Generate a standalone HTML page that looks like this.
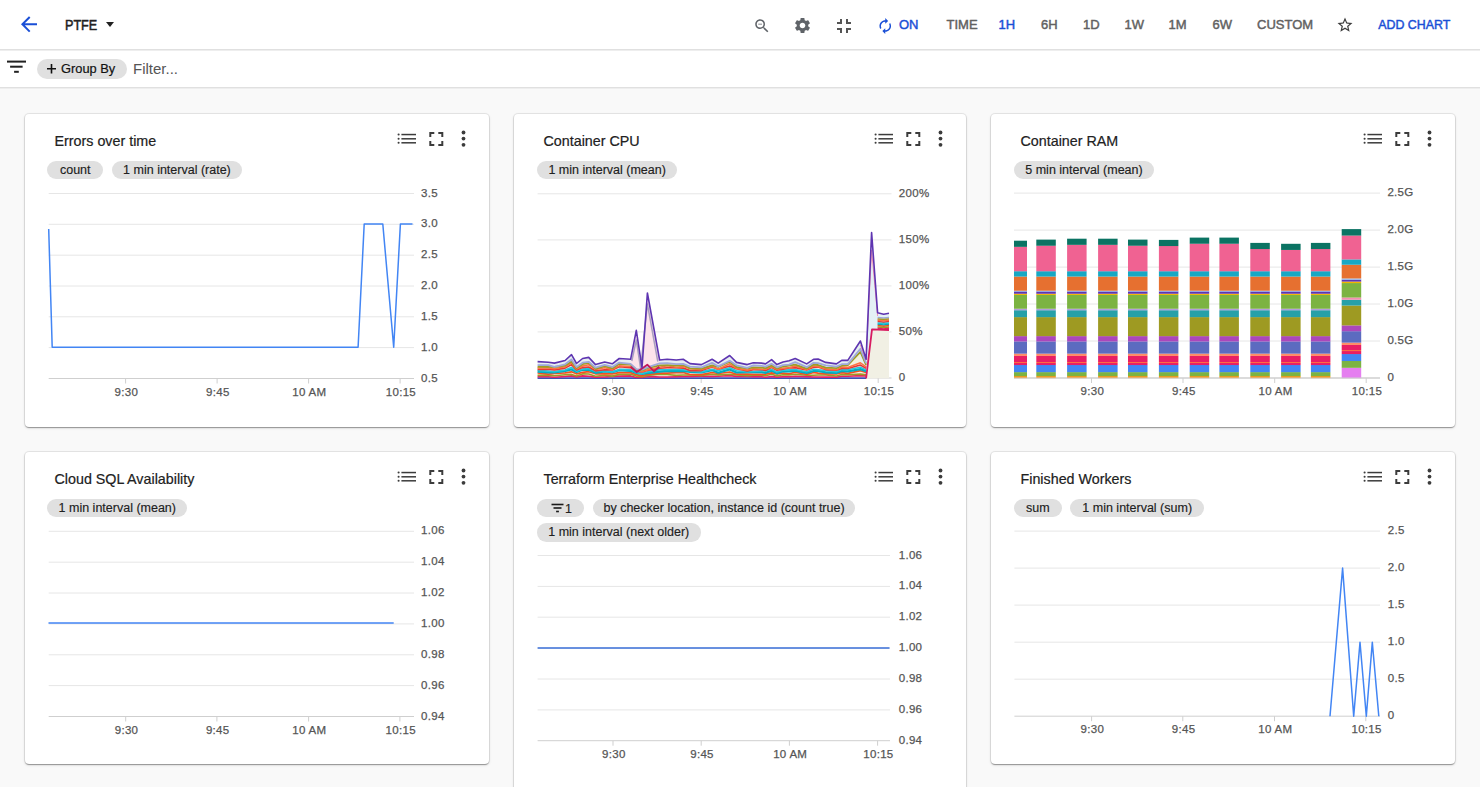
<!DOCTYPE html>
<html><head><meta charset="utf-8"><style>
*{box-sizing:border-box}
html,body{margin:0;padding:0}
body{width:1480px;height:787px;overflow:hidden;position:relative;background:#f9f9f9;font-family:"Liberation Sans", sans-serif;color:#212121}
.hdr{position:absolute;left:0;top:0;width:1480px;height:50px;background:#fff;border-bottom:1px solid #e0e0e0;box-shadow:0 1px 0 #eeeeee}
.fbar{position:absolute;left:0;top:51px;width:1480px;height:37px;background:#fff;border-bottom:1px solid #e0e0e0;box-shadow:0 1px 0 #eeeeee}
.card{position:absolute;background:#fff;border-radius:4px;box-shadow:0 0 0 1px rgba(0,0,0,.07),0 1px 1px rgba(0,0,0,.18),0 2px 1px -1px rgba(0,0,0,.12),0 1px 3px rgba(0,0,0,.15)}
.t{position:absolute;white-space:nowrap;line-height:1}
.title{font-size:14.3px;color:#212121;-webkit-text-stroke:0.2px #212121}
.chip{position:absolute;height:18.5px;border-radius:9.25px;background:#e0e0e0;font-size:12.5px;line-height:19.5px;color:#212121;white-space:nowrap;text-align:center;-webkit-text-stroke:0.15px #212121}
.tb{position:absolute;top:18px;font-size:13px;font-weight:400;-webkit-text-stroke:0.45px currentColor;color:#616161;line-height:13px;white-space:nowrap}
svg text{font-family:"Liberation Sans", sans-serif;stroke:#555;stroke-width:0.25px;letter-spacing:0.3px}
</style></head><body>
<div class="hdr">
<svg style="position:absolute;left:17px;top:12.4px" width="24" height="24" viewBox="0 0 24 24"><path d="M20 11H7.83l5.59-5.59L12 4l-8 8 8 8 1.41-1.41L7.83 13H20v-2z" fill="#1a4fd6" transform="translate(0,0.3)"/></svg>
<div class="t" style="left:65.3px;top:18.2px;font-size:14px;font-weight:400;-webkit-text-stroke:0.5px #212121;color:#212121;transform:scaleX(0.9);transform-origin:0 0">PTFE</div>
<svg style="position:absolute;left:106px;top:22px" width="8" height="5" viewBox="0 0 8 5"><path d="M0 0H8L4 5z" fill="#212121"/></svg>
<svg style="position:absolute;left:752.5px;top:17px" width="18" height="18" viewBox="0 0 24 24"><path fill="#5f6368" d="M15.5 14h-.79l-.28-.27C15.41 12.59 16 11.11 16 9.5 16 5.91 13.09 3 9.5 3S3 5.91 3 9.5 5.91 16 9.5 16c1.61 0 3.09-.59 4.23-1.57l.27.28v.79l5 4.99L20.49 19l-4.99-5zm-6 0C7.01 14 5 11.99 5 9.5S7.01 5 9.5 5 14 7.01 14 9.5 11.99 14 9.5 14zM7 9h5v1H7z"/></svg>
<svg style="position:absolute;left:793px;top:16px" width="19" height="19" viewBox="0 0 24 24"><path fill="#5f6368" d="M19.14 12.94c.04-.3.06-.61.06-.94 0-.32-.02-.64-.07-.94l2.03-1.58c.18-.14.23-.41.12-.61l-1.92-3.32c-.12-.22-.37-.29-.59-.22l-2.39.96c-.5-.38-1.03-.7-1.62-.94l-.36-2.54c-.04-.24-.24-.41-.48-.41h-3.84c-.24 0-.43.17-.47.41l-.36 2.54c-.59.24-1.13.57-1.62.94l-2.39-.96c-.22-.08-.47 0-.59.22L2.74 8.87c-.12.21-.08.47.12.61l2.03 1.58c-.05.3-.09.63-.09.94s.02.64.07.94l-2.03 1.58c-.18.14-.23.41-.12.61l1.92 3.32c.12.22.37.29.59.22l2.39-.96c.5.38 1.03.7 1.62.94l.36 2.54c.05.24.24.41.48.41h3.84c.24 0 .44-.17.47-.41l.36-2.54c.59-.24 1.13-.56 1.62-.94l2.39.96c.22.08.47 0 .59-.22l1.92-3.32c.12-.22.07-.47-.12-.61l-2.01-1.58zM12 15.6c-1.98 0-3.6-1.62-3.6-3.6s1.62-3.6 3.6-3.6 3.6 1.62 3.6 3.6-1.62 3.6-3.6 3.6z"/></svg>
<svg style="position:absolute;left:831.5px;top:13.6px" width="24" height="24" viewBox="0 0 24 24"><path fill="#555" d="M5 16h3v3h2v-5H5v2zm3-8H5v2h5V5H8v3zm6 11h2v-3h3v-2h-5v5zm2-11V5h-2v5h5V8h-3z"/></svg>
<svg style="position:absolute;left:878.3px;top:17.8px" width="14.5" height="16" viewBox="2 1 20 22"><path fill="#1a4fd6" d="M12 6v3l4-4-4-4v3c-4.42 0-8 3.58-8 8 0 1.57.46 3.03 1.24 4.26L6.7 14.8c-.45-.83-.7-1.79-.7-2.8 0-3.31 2.69-6 6-6zm6.76 1.74L17.3 9.2c.44.84.7 1.79.7 2.8 0 3.31-2.69 6-6 6v-3l-4 4 4 4v-3c4.42 0 8-3.58 8-8 0-1.57-.46-3.03-1.24-4.26z"/></svg>
<div class="tb" style="left:899px;color:#1a4fd6">ON</div>
<div class="tb" style="left:946.5px">TIME</div>
<div class="tb" style="left:998.5px;color:#1a4fd6">1H</div>
<div class="tb" style="left:1041px">6H</div>
<div class="tb" style="left:1083px">1D</div>
<div class="tb" style="left:1124.5px">1W</div>
<div class="tb" style="left:1168.5px">1M</div>
<div class="tb" style="left:1212.5px">6W</div>
<div class="tb" style="left:1257px">CUSTOM</div>
<svg style="position:absolute;left:1336.3px;top:16.2px" width="18" height="18" viewBox="0 0 24 24"><path fill="#3c3c3c" d="M22 9.24l-7.19-.62L12 2 9.19 8.63 2 9.24l5.46 4.73L5.82 21 12 17.27 18.18 21l-1.63-7.03L22 9.24zM12 15.4l-3.76 2.27 1-4.28-3.32-2.88 4.38-.38L12 6.1l1.71 4.04 4.38.38-3.32 2.88 1 4.28L12 15.4z"/></svg>
<div class="tb" style="left:1378.2px;top:18.5px;color:#1a4fd6;font-size:12.4px">ADD CHART</div>
</div>
<div class="fbar">
<svg style="position:absolute;left:7px;top:9px" width="19" height="14" viewBox="0 0 19 14"><g fill="#212121"><rect x="0" y="0.6" width="19" height="2"/><rect x="3.1" y="5.7" width="12.5" height="2"/><rect x="7.1" y="10.8" width="4.7" height="2"/></g></svg>
<div style="position:absolute;left:37px;top:7.7px;width:89.7px;height:20.3px;border-radius:10.15px;background:#e0e0e0"></div>
<svg style="position:absolute;left:47.3px;top:13.2px" width="9" height="9.6" viewBox="0 0 9 9.6"><path d="M3.7 0h1.6v9.6H3.7zM0 4h9v1.6H0z" fill="#111"/></svg>
<div class="t" style="left:60.5px;top:10.7px;font-size:13.5px;color:#111;-webkit-text-stroke:0.2px #111;transform:scaleX(0.95);transform-origin:0 0">Group By</div>
<div class="t" style="left:133px;top:9.5px;font-size:15px;color:#555">Filter...</div>
</div>

<div class="card" style="left:25px;top:114px;width:463.6px;height:312.5px"></div>
<div class="card" style="left:514.4px;top:114px;width:451.4px;height:312.5px"></div>
<div class="card" style="left:991.4px;top:114px;width:463.6px;height:312.5px"></div>
<div class="card" style="left:25px;top:452px;width:463.6px;height:312px"></div>
<div class="card" style="left:514.4px;top:452px;width:451.4px;height:360px"></div>
<div class="card" style="left:991.4px;top:452px;width:463.6px;height:312px"></div>

<div class="t title" style="left:54.5px;top:134.2px">Errors over time</div>
<div class="chip" style="left:47.4px;top:160.5px;width:55.7px">count</div>
<div class="chip" style="left:111.7px;top:160.5px;width:130.5px">1 min interval (rate)</div>
<svg style="position:absolute;left:392px;top:128px" width="80" height="22" viewBox="0 0 80 22">
<g fill="#3c3c3c">
<circle cx="6.6" cy="6.5" r="1.05"/><circle cx="6.6" cy="10.8" r="1.05"/><circle cx="6.6" cy="14.8" r="1.05"/>
<rect x="9.4" y="5.8" width="14.6" height="1.5"/><rect x="9.4" y="10.05" width="14.6" height="1.5"/><rect x="9.4" y="14.05" width="14.6" height="1.5"/>
</g>
<path fill="#3c3c3c" transform="translate(32.3,-1)" d="M7 14H5v5h5v-2H7v-3zm-2-4h2V7h3V5H5v5zm12 7h-3v2h5v-5h-2v3zM14 5v2h3v3h2V5h-5z"/>
<g fill="#3c3c3c"><circle cx="71.5" cy="4.5" r="1.9"/><circle cx="71.5" cy="10.6" r="1.9"/><circle cx="71.5" cy="16.8" r="1.9"/></g>
</svg>

<div class="t title" style="left:543.5px;top:134.2px">Container CPU</div>
<div class="chip" style="left:536.8px;top:160.5px;width:140.7px">1 min interval (mean)</div>
<svg style="position:absolute;left:869px;top:128px" width="80" height="22" viewBox="0 0 80 22">
<g fill="#3c3c3c">
<circle cx="6.6" cy="6.5" r="1.05"/><circle cx="6.6" cy="10.8" r="1.05"/><circle cx="6.6" cy="14.8" r="1.05"/>
<rect x="9.4" y="5.8" width="14.6" height="1.5"/><rect x="9.4" y="10.05" width="14.6" height="1.5"/><rect x="9.4" y="14.05" width="14.6" height="1.5"/>
</g>
<path fill="#3c3c3c" transform="translate(32.3,-1)" d="M7 14H5v5h5v-2H7v-3zm-2-4h2V7h3V5H5v5zm12 7h-3v2h5v-5h-2v3zM14 5v2h3v3h2V5h-5z"/>
<g fill="#3c3c3c"><circle cx="71.5" cy="4.5" r="1.9"/><circle cx="71.5" cy="10.6" r="1.9"/><circle cx="71.5" cy="16.8" r="1.9"/></g>
</svg>

<div class="t title" style="left:1020.5px;top:134.2px">Container RAM</div>
<div class="chip" style="left:1013.8px;top:160.5px;width:140.4px">5 min interval (mean)</div>
<svg style="position:absolute;left:1358px;top:128px" width="80" height="22" viewBox="0 0 80 22">
<g fill="#3c3c3c">
<circle cx="6.6" cy="6.5" r="1.05"/><circle cx="6.6" cy="10.8" r="1.05"/><circle cx="6.6" cy="14.8" r="1.05"/>
<rect x="9.4" y="5.8" width="14.6" height="1.5"/><rect x="9.4" y="10.05" width="14.6" height="1.5"/><rect x="9.4" y="14.05" width="14.6" height="1.5"/>
</g>
<path fill="#3c3c3c" transform="translate(32.3,-1)" d="M7 14H5v5h5v-2H7v-3zm-2-4h2V7h3V5H5v5zm12 7h-3v2h5v-5h-2v3zM14 5v2h3v3h2V5h-5z"/>
<g fill="#3c3c3c"><circle cx="71.5" cy="4.5" r="1.9"/><circle cx="71.5" cy="10.6" r="1.9"/><circle cx="71.5" cy="16.8" r="1.9"/></g>
</svg>

<div class="t title" style="left:54.5px;top:472.2px">Cloud SQL Availability</div>
<div class="chip" style="left:47.2px;top:498.6px;width:140.2px">1 min interval (mean)</div>
<svg style="position:absolute;left:392px;top:466px" width="80" height="22" viewBox="0 0 80 22">
<g fill="#3c3c3c">
<circle cx="6.6" cy="6.5" r="1.05"/><circle cx="6.6" cy="10.8" r="1.05"/><circle cx="6.6" cy="14.8" r="1.05"/>
<rect x="9.4" y="5.8" width="14.6" height="1.5"/><rect x="9.4" y="10.05" width="14.6" height="1.5"/><rect x="9.4" y="14.05" width="14.6" height="1.5"/>
</g>
<path fill="#3c3c3c" transform="translate(32.3,-1)" d="M7 14H5v5h5v-2H7v-3zm-2-4h2V7h3V5H5v5zm12 7h-3v2h5v-5h-2v3zM14 5v2h3v3h2V5h-5z"/>
<g fill="#3c3c3c"><circle cx="71.5" cy="4.5" r="1.9"/><circle cx="71.5" cy="10.6" r="1.9"/><circle cx="71.5" cy="16.8" r="1.9"/></g>
</svg>

<div class="t title" style="left:543.5px;top:472.2px">Terraform Enterprise Healthcheck</div>
<div class="chip" style="left:536.8px;top:498.5px;width:47.3px"></div>
<svg style="position:absolute;left:550.5px;top:502.5px" width="14" height="10" viewBox="0 0 14 10"><g fill="#1a1a1a"><rect x="0.5" y="0.7" width="12" height="1.6"/><rect x="2.5" y="4.2" width="8" height="1.6"/><rect x="5.1" y="7.7" width="2.8" height="1.6"/></g></svg>
<div class="t" style="left:565px;top:502.8px;font-size:12.5px;-webkit-text-stroke:0.15px #212121">1</div>
<div class="chip" style="left:593.1px;top:498.5px;width:261.9px">by checker location, instance id (count true)</div>
<div class="chip" style="left:536.8px;top:523.4px;width:163.9px">1 min interval (next older)</div>
<svg style="position:absolute;left:869px;top:466px" width="80" height="22" viewBox="0 0 80 22">
<g fill="#3c3c3c">
<circle cx="6.6" cy="6.5" r="1.05"/><circle cx="6.6" cy="10.8" r="1.05"/><circle cx="6.6" cy="14.8" r="1.05"/>
<rect x="9.4" y="5.8" width="14.6" height="1.5"/><rect x="9.4" y="10.05" width="14.6" height="1.5"/><rect x="9.4" y="14.05" width="14.6" height="1.5"/>
</g>
<path fill="#3c3c3c" transform="translate(32.3,-1)" d="M7 14H5v5h5v-2H7v-3zm-2-4h2V7h3V5H5v5zm12 7h-3v2h5v-5h-2v3zM14 5v2h3v3h2V5h-5z"/>
<g fill="#3c3c3c"><circle cx="71.5" cy="4.5" r="1.9"/><circle cx="71.5" cy="10.6" r="1.9"/><circle cx="71.5" cy="16.8" r="1.9"/></g>
</svg>

<div class="t title" style="left:1020.5px;top:472.2px">Finished Workers</div>
<div class="chip" style="left:1014px;top:498.6px;width:47.6px">sum</div>
<div class="chip" style="left:1070.4px;top:498.6px;width:133.6px">1 min interval (sum)</div>
<svg style="position:absolute;left:1358px;top:466px" width="80" height="22" viewBox="0 0 80 22">
<g fill="#3c3c3c">
<circle cx="6.6" cy="6.5" r="1.05"/><circle cx="6.6" cy="10.8" r="1.05"/><circle cx="6.6" cy="14.8" r="1.05"/>
<rect x="9.4" y="5.8" width="14.6" height="1.5"/><rect x="9.4" y="10.05" width="14.6" height="1.5"/><rect x="9.4" y="14.05" width="14.6" height="1.5"/>
</g>
<path fill="#3c3c3c" transform="translate(32.3,-1)" d="M7 14H5v5h5v-2H7v-3zm-2-4h2V7h3V5H5v5zm12 7h-3v2h5v-5h-2v3zM14 5v2h3v3h2V5h-5z"/>
<g fill="#3c3c3c"><circle cx="71.5" cy="4.5" r="1.9"/><circle cx="71.5" cy="10.6" r="1.9"/><circle cx="71.5" cy="16.8" r="1.9"/></g>
</svg>

<svg style="position:absolute;left:0;top:0" width="1480" height="787" viewBox="0 0 1480 787"><line x1="48.7" y1="193.5" x2="414" y2="193.5" stroke="#e6e6e6" stroke-width="1"/><text x="421.0" y="196.5" font-size="11.5" fill="#555555" text-anchor="start" font-weight="400">3.5</text><line x1="48.7" y1="224.3" x2="414" y2="224.3" stroke="#e6e6e6" stroke-width="1"/><text x="421.0" y="227.3" font-size="11.5" fill="#555555" text-anchor="start" font-weight="400">3.0</text><line x1="48.7" y1="255.2" x2="414" y2="255.2" stroke="#e6e6e6" stroke-width="1"/><text x="421.0" y="258.2" font-size="11.5" fill="#555555" text-anchor="start" font-weight="400">2.5</text><line x1="48.7" y1="286.0" x2="414" y2="286.0" stroke="#e6e6e6" stroke-width="1"/><text x="421.0" y="289.0" font-size="11.5" fill="#555555" text-anchor="start" font-weight="400">2.0</text><line x1="48.7" y1="316.8" x2="414" y2="316.8" stroke="#e6e6e6" stroke-width="1"/><text x="421.0" y="319.8" font-size="11.5" fill="#555555" text-anchor="start" font-weight="400">1.5</text><line x1="48.7" y1="347.6" x2="414" y2="347.6" stroke="#e6e6e6" stroke-width="1"/><text x="421.0" y="350.6" font-size="11.5" fill="#555555" text-anchor="start" font-weight="400">1.0</text><line x1="48.7" y1="378.5" x2="414" y2="378.5" stroke="#cfcfcf" stroke-width="1"/><text x="421.0" y="381.5" font-size="11.5" fill="#555555" text-anchor="start" font-weight="400">0.5</text><line x1="125.6" y1="378.5" x2="125.6" y2="383.5" stroke="#cfcfcf" stroke-width="1"/><text x="126.4" y="395.5" font-size="11.5" fill="#555555" text-anchor="middle" font-weight="400">9:30</text><line x1="217.1" y1="378.5" x2="217.1" y2="383.5" stroke="#cfcfcf" stroke-width="1"/><text x="217.9" y="395.5" font-size="11.5" fill="#555555" text-anchor="middle" font-weight="400">9:45</text><line x1="308.6" y1="378.5" x2="308.6" y2="383.5" stroke="#cfcfcf" stroke-width="1"/><text x="309.4" y="395.5" font-size="11.5" fill="#555555" text-anchor="middle" font-weight="400">10 AM</text><line x1="400.1" y1="378.5" x2="400.1" y2="383.5" stroke="#cfcfcf" stroke-width="1"/><text x="400.9" y="395.5" font-size="11.5" fill="#555555" text-anchor="middle" font-weight="400">10:15</text><polyline points="48.7,229.0 52.2,347.3 358.1,347.3 364.2,224.0 382.8,224.0 393.7,347.3 400.4,224.0 412.5,224.0" fill="none" stroke="#4285f4" stroke-width="1.5" stroke-linejoin="round" /><line x1="48.7" y1="531.3" x2="414" y2="531.3" stroke="#e6e6e6" stroke-width="1"/><text x="421.0" y="534.3" font-size="11.5" fill="#555555" text-anchor="start" font-weight="400">1.06</text><line x1="48.7" y1="562.2" x2="414" y2="562.2" stroke="#e6e6e6" stroke-width="1"/><text x="421.0" y="565.2" font-size="11.5" fill="#555555" text-anchor="start" font-weight="400">1.04</text><line x1="48.7" y1="593.0" x2="414" y2="593.0" stroke="#e6e6e6" stroke-width="1"/><text x="421.0" y="596.0" font-size="11.5" fill="#555555" text-anchor="start" font-weight="400">1.02</text><line x1="48.7" y1="623.9" x2="414" y2="623.9" stroke="#e6e6e6" stroke-width="1"/><text x="421.0" y="626.9" font-size="11.5" fill="#555555" text-anchor="start" font-weight="400">1.00</text><line x1="48.7" y1="654.8" x2="414" y2="654.8" stroke="#e6e6e6" stroke-width="1"/><text x="421.0" y="657.8" font-size="11.5" fill="#555555" text-anchor="start" font-weight="400">0.98</text><line x1="48.7" y1="685.6" x2="414" y2="685.6" stroke="#e6e6e6" stroke-width="1"/><text x="421.0" y="688.6" font-size="11.5" fill="#555555" text-anchor="start" font-weight="400">0.96</text><line x1="48.7" y1="716.5" x2="414" y2="716.5" stroke="#cfcfcf" stroke-width="1"/><text x="421.0" y="719.5" font-size="11.5" fill="#555555" text-anchor="start" font-weight="400">0.94</text><line x1="125.7" y1="716.5" x2="125.7" y2="721.5" stroke="#cfcfcf" stroke-width="1"/><text x="126.5" y="733.5" font-size="11.5" fill="#555555" text-anchor="middle" font-weight="400">9:30</text><line x1="216.9" y1="716.5" x2="216.9" y2="721.5" stroke="#cfcfcf" stroke-width="1"/><text x="217.7" y="733.5" font-size="11.5" fill="#555555" text-anchor="middle" font-weight="400">9:45</text><line x1="308.6" y1="716.5" x2="308.6" y2="721.5" stroke="#cfcfcf" stroke-width="1"/><text x="309.4" y="733.5" font-size="11.5" fill="#555555" text-anchor="middle" font-weight="400">10 AM</text><line x1="399.9" y1="716.5" x2="399.9" y2="721.5" stroke="#cfcfcf" stroke-width="1"/><text x="400.7" y="733.5" font-size="11.5" fill="#555555" text-anchor="middle" font-weight="400">10:15</text><polyline points="48.5,623.0 393.7,623.0" fill="none" stroke="#4285f4" stroke-width="1.5" stroke-linejoin="round" /><line x1="537.6" y1="555.5" x2="890" y2="555.5" stroke="#e6e6e6" stroke-width="1"/><text x="898.7" y="558.5" font-size="11.5" fill="#555555" text-anchor="start" font-weight="400">1.06</text><line x1="537.6" y1="586.4" x2="890" y2="586.4" stroke="#e6e6e6" stroke-width="1"/><text x="898.7" y="589.4" font-size="11.5" fill="#555555" text-anchor="start" font-weight="400">1.04</text><line x1="537.6" y1="617.2" x2="890" y2="617.2" stroke="#e6e6e6" stroke-width="1"/><text x="898.7" y="620.2" font-size="11.5" fill="#555555" text-anchor="start" font-weight="400">1.02</text><line x1="537.6" y1="648.1" x2="890" y2="648.1" stroke="#e6e6e6" stroke-width="1"/><text x="898.7" y="651.1" font-size="11.5" fill="#555555" text-anchor="start" font-weight="400">1.00</text><line x1="537.6" y1="679.0" x2="890" y2="679.0" stroke="#e6e6e6" stroke-width="1"/><text x="898.7" y="682.0" font-size="11.5" fill="#555555" text-anchor="start" font-weight="400">0.98</text><line x1="537.6" y1="709.9" x2="890" y2="709.9" stroke="#e6e6e6" stroke-width="1"/><text x="898.7" y="712.9" font-size="11.5" fill="#555555" text-anchor="start" font-weight="400">0.96</text><line x1="537.6" y1="740.7" x2="890" y2="740.7" stroke="#cfcfcf" stroke-width="1"/><text x="898.7" y="743.7" font-size="11.5" fill="#555555" text-anchor="start" font-weight="400">0.94</text><line x1="613.0" y1="740.7" x2="613.0" y2="745.7" stroke="#cfcfcf" stroke-width="1"/><text x="613.8" y="757.7" font-size="11.5" fill="#555555" text-anchor="middle" font-weight="400">9:30</text><line x1="701.2" y1="740.7" x2="701.2" y2="745.7" stroke="#cfcfcf" stroke-width="1"/><text x="702.0" y="757.7" font-size="11.5" fill="#555555" text-anchor="middle" font-weight="400">9:45</text><line x1="789.4" y1="740.7" x2="789.4" y2="745.7" stroke="#cfcfcf" stroke-width="1"/><text x="790.2" y="757.7" font-size="11.5" fill="#555555" text-anchor="middle" font-weight="400">10 AM</text><line x1="877.6" y1="740.7" x2="877.6" y2="745.7" stroke="#cfcfcf" stroke-width="1"/><text x="878.4" y="757.7" font-size="11.5" fill="#555555" text-anchor="middle" font-weight="400">10:15</text><polyline points="537.6,648.0 889.5,648.0" fill="none" stroke="#3a6fd8" stroke-width="1.5" stroke-linejoin="round" /><line x1="1014.4" y1="531.1" x2="1380" y2="531.1" stroke="#e6e6e6" stroke-width="1"/><text x="1387.8" y="534.1" font-size="11.5" fill="#555555" text-anchor="start" font-weight="400">2.5</text><line x1="1014.4" y1="568.1" x2="1380" y2="568.1" stroke="#e6e6e6" stroke-width="1"/><text x="1387.8" y="571.1" font-size="11.5" fill="#555555" text-anchor="start" font-weight="400">2.0</text><line x1="1014.4" y1="605.1" x2="1380" y2="605.1" stroke="#e6e6e6" stroke-width="1"/><text x="1387.8" y="608.1" font-size="11.5" fill="#555555" text-anchor="start" font-weight="400">1.5</text><line x1="1014.4" y1="642.2" x2="1380" y2="642.2" stroke="#e6e6e6" stroke-width="1"/><text x="1387.8" y="645.2" font-size="11.5" fill="#555555" text-anchor="start" font-weight="400">1.0</text><line x1="1014.4" y1="679.2" x2="1380" y2="679.2" stroke="#e6e6e6" stroke-width="1"/><text x="1387.8" y="682.2" font-size="11.5" fill="#555555" text-anchor="start" font-weight="400">0.5</text><line x1="1014.4" y1="716.2" x2="1380" y2="716.2" stroke="#cfcfcf" stroke-width="1"/><text x="1387.8" y="719.2" font-size="11.5" fill="#555555" text-anchor="start" font-weight="400">0</text><line x1="1091.6" y1="716.2" x2="1091.6" y2="721.2" stroke="#cfcfcf" stroke-width="1"/><text x="1092.4" y="733.2" font-size="11.5" fill="#555555" text-anchor="middle" font-weight="400">9:30</text><line x1="1182.8" y1="716.2" x2="1182.8" y2="721.2" stroke="#cfcfcf" stroke-width="1"/><text x="1183.6" y="733.2" font-size="11.5" fill="#555555" text-anchor="middle" font-weight="400">9:45</text><line x1="1274.5" y1="716.2" x2="1274.5" y2="721.2" stroke="#cfcfcf" stroke-width="1"/><text x="1275.3" y="733.2" font-size="11.5" fill="#555555" text-anchor="middle" font-weight="400">10 AM</text><line x1="1365.8" y1="716.2" x2="1365.8" y2="721.2" stroke="#cfcfcf" stroke-width="1"/><text x="1366.6" y="733.2" font-size="11.5" fill="#555555" text-anchor="middle" font-weight="400">10:15</text><polyline points="1330.0,716.2 1342.6,568.1 1353.7,716.2 1360.0,642.3 1366.3,716.2 1372.3,642.3 1378.8,716.2" fill="none" stroke="#4285f4" stroke-width="1.5" stroke-linejoin="round" /><line x1="537.6" y1="193.8" x2="891.5" y2="193.8" stroke="#e6e6e6" stroke-width="1"/><text x="898.8" y="196.8" font-size="11.5" fill="#555555" text-anchor="start" font-weight="400">200%</text><line x1="537.6" y1="239.9" x2="891.5" y2="239.9" stroke="#e6e6e6" stroke-width="1"/><text x="898.8" y="242.9" font-size="11.5" fill="#555555" text-anchor="start" font-weight="400">150%</text><line x1="537.6" y1="285.9" x2="891.5" y2="285.9" stroke="#e6e6e6" stroke-width="1"/><text x="898.8" y="288.9" font-size="11.5" fill="#555555" text-anchor="start" font-weight="400">100%</text><line x1="537.6" y1="331.9" x2="891.5" y2="331.9" stroke="#e6e6e6" stroke-width="1"/><text x="898.8" y="334.9" font-size="11.5" fill="#555555" text-anchor="start" font-weight="400">50%</text><line x1="537.6" y1="378.0" x2="891.5" y2="378.0" stroke="#cfcfcf" stroke-width="1"/><text x="898.8" y="381.0" font-size="11.5" fill="#555555" text-anchor="start" font-weight="400">0</text><line x1="612.6" y1="378.0" x2="612.6" y2="383.0" stroke="#cfcfcf" stroke-width="1"/><text x="613.4" y="395.0" font-size="11.5" fill="#555555" text-anchor="middle" font-weight="400">9:30</text><line x1="701.2" y1="378.0" x2="701.2" y2="383.0" stroke="#cfcfcf" stroke-width="1"/><text x="702.0" y="395.0" font-size="11.5" fill="#555555" text-anchor="middle" font-weight="400">9:45</text><line x1="789.4" y1="378.0" x2="789.4" y2="383.0" stroke="#cfcfcf" stroke-width="1"/><text x="790.2" y="395.0" font-size="11.5" fill="#555555" text-anchor="middle" font-weight="400">10 AM</text><line x1="878.2" y1="378.0" x2="878.2" y2="383.0" stroke="#cfcfcf" stroke-width="1"/><text x="879.0" y="395.0" font-size="11.5" fill="#555555" text-anchor="middle" font-weight="400">10:15</text><polygon points="537.6,361.6 548.3,362.3 554.4,363.1 565.1,360.5 571.5,354.7 576.5,363.5 582.6,358.5 588.7,357.4 595.5,364.6 604.7,362.0 612.3,363.8 619.2,358.5 630.6,359.3 636.3,330.3 642.0,367.7 647.4,293.0 659.6,360.0 667.2,359.3 676.3,360.0 683.2,359.3 690.0,363.6 701.4,364.6 712.1,359.3 718.2,363.1 729.7,355.5 736.5,362.4 747.2,364.6 753.3,362.7 761.7,363.1 765.5,363.9 771.6,359.6 776.9,364.6 783.0,362.0 789.1,360.8 795.2,358.5 806.7,363.9 813.5,359.3 818.1,359.0 825.7,362.4 836.4,363.9 841.7,360.4 847.8,360.4 860.4,341.0 866.1,359.3 866.1,363.2 860.4,348.7 847.8,364.1 841.7,364.2 836.4,366.6 825.7,365.4 818.1,363.1 813.5,362.8 806.7,367.2 795.2,362.2 789.1,364.6 783.0,365.2 776.9,367.3 771.6,363.8 765.5,366.6 761.7,365.9 753.3,365.4 747.2,367.8 736.5,365.3 729.7,360.8 718.2,366.4 712.1,362.9 701.4,367.3 690.0,366.7 683.2,363.8 676.3,364.2 667.2,363.2 659.6,363.4 647.4,367.4 642.0,369.6 636.3,369.1 630.6,363.8 619.2,362.6 612.3,366.9 604.7,364.9 595.5,367.7 588.7,361.8 582.6,362.7 576.5,367.0 571.5,359.5 565.1,364.3 554.4,366.9 548.3,365.1 537.6,365.2" fill="#e6eef1" stroke="none" /><polygon points="537.6,365.2 548.3,365.1 554.4,366.9 565.1,364.3 571.5,359.5 576.5,367.0 582.6,362.7 588.7,361.8 595.5,367.7 604.7,364.9 612.3,366.9 619.2,362.6 630.6,363.8 636.3,369.1 642.0,369.6 647.4,367.4 659.6,363.4 667.2,363.2 676.3,364.2 683.2,363.8 690.0,366.7 701.4,367.3 712.1,362.9 718.2,366.4 729.7,360.8 736.5,365.3 747.2,367.8 753.3,365.4 761.7,365.9 765.5,366.6 771.6,363.8 776.9,367.3 783.0,365.2 789.1,364.6 795.2,362.2 806.7,367.2 813.5,362.8 818.1,363.1 825.7,365.4 836.4,366.6 841.7,364.2 847.8,364.1 860.4,348.7 866.1,363.2 866.1,364.8 860.4,351.9 847.8,365.2 841.7,365.7 836.4,368.1 825.7,367.6 818.1,365.0 813.5,364.5 806.7,368.6 795.2,364.7 789.1,365.7 783.0,366.5 776.9,368.6 771.6,365.4 765.5,368.1 761.7,367.7 753.3,367.5 747.2,368.3 736.5,367.0 729.7,361.8 718.2,367.0 712.1,365.3 701.4,368.6 690.0,368.4 683.2,365.0 676.3,365.7 667.2,365.1 659.6,365.3 647.4,368.1 642.0,370.3 636.3,369.9 630.6,364.6 619.2,363.8 612.3,368.4 604.7,366.2 595.5,368.9 588.7,362.9 582.6,364.2 576.5,368.1 571.5,361.6 565.1,365.6 554.4,367.0 548.3,366.8 537.6,366.9" fill="#eceef8" stroke="none" /><polygon points="537.6,366.9 548.3,366.8 554.4,367.0 565.1,365.6 571.5,361.6 576.5,368.1 582.6,364.2 588.7,362.9 595.5,368.9 604.7,366.2 612.3,368.4 619.2,363.8 630.6,364.6 636.3,369.9 642.0,370.3 647.4,368.1 659.6,365.3 667.2,365.1 676.3,365.7 683.2,365.0 690.0,368.4 701.4,368.6 712.1,365.3 718.2,367.0 729.7,361.8 736.5,367.0 747.2,368.3 753.3,367.5 761.7,367.7 765.5,368.1 771.6,365.4 776.9,368.6 783.0,366.5 789.1,365.7 795.2,364.7 806.7,368.6 813.5,364.5 818.1,365.0 825.7,367.6 836.4,368.1 841.7,365.7 847.8,365.2 860.4,351.9 866.1,364.8 866.1,366.8 860.4,362.8 847.8,367.4 841.7,367.1 836.4,369.8 825.7,368.9 818.1,366.6 813.5,366.0 806.7,369.5 795.2,366.0 789.1,367.7 783.0,368.3 776.9,369.3 771.6,366.7 765.5,369.2 761.7,369.3 753.3,368.8 747.2,370.1 736.5,368.4 729.7,363.8 718.2,369.2 712.1,366.5 701.4,369.6 690.0,368.6 683.2,366.6 676.3,367.3 667.2,365.8 659.6,367.3 647.4,370.0 642.0,371.5 636.3,370.9 630.6,366.5 619.2,365.9 612.3,369.4 604.7,367.8 595.5,369.4 588.7,364.7 582.6,366.1 576.5,368.9 571.5,362.8 565.1,366.7 554.4,368.7 548.3,367.9 537.6,368.0" fill="#f2f2de" stroke="none" /><polygon points="537.6,368.0 548.3,367.9 554.4,368.7 565.1,366.7 571.5,362.8 576.5,368.9 582.6,366.1 588.7,364.7 595.5,369.4 604.7,367.8 612.3,369.4 619.2,365.9 630.6,366.5 636.3,370.9 642.0,371.5 647.4,370.0 659.6,367.3 667.2,365.8 676.3,367.3 683.2,366.6 690.0,368.6 701.4,369.6 712.1,366.5 718.2,369.2 729.7,363.8 736.5,368.4 747.2,370.1 753.3,368.8 761.7,369.3 765.5,369.2 771.6,366.7 776.9,369.3 783.0,368.3 789.1,367.7 795.2,366.0 806.7,369.5 813.5,366.0 818.1,366.6 825.7,368.9 836.4,369.8 841.7,367.1 847.8,367.4 860.4,362.8 866.1,366.8 866.1,368.2 860.4,365.1 847.8,368.5 841.7,368.4 836.4,370.2 825.7,369.6 818.1,366.9 813.5,367.2 806.7,369.9 795.2,367.6 789.1,367.9 783.0,369.1 776.9,370.2 771.6,367.3 765.5,370.6 761.7,369.6 753.3,369.6 747.2,370.9 736.5,368.8 729.7,366.0 718.2,369.2 712.1,367.1 701.4,370.6 690.0,370.6 683.2,368.1 676.3,367.8 667.2,367.7 659.6,368.2 647.4,370.5 642.0,372.0 636.3,371.1 630.6,367.6 619.2,366.8 612.3,369.9 604.7,369.7 595.5,370.9 588.7,367.0 582.6,367.6 576.5,370.0 571.5,364.6 565.1,368.1 554.4,369.9 548.3,369.2 537.6,369.4" fill="#fdebe4" stroke="none" /><polygon points="537.6,369.4 548.3,369.2 554.4,369.9 565.1,368.1 571.5,364.6 576.5,370.0 582.6,367.6 588.7,367.0 595.5,370.9 604.7,369.7 612.3,369.9 619.2,366.8 630.6,367.6 636.3,371.1 642.0,372.0 647.4,370.5 659.6,368.2 667.2,367.7 676.3,367.8 683.2,368.1 690.0,370.6 701.4,370.6 712.1,367.1 718.2,369.2 729.7,366.0 736.5,368.8 747.2,370.9 753.3,369.6 761.7,369.6 765.5,370.6 771.6,367.3 776.9,370.2 783.0,369.1 789.1,367.9 795.2,367.6 806.7,369.9 813.5,367.2 818.1,366.9 825.7,369.6 836.4,370.2 841.7,368.4 847.8,368.5 860.4,365.1 866.1,368.2 866.1,369.9 860.4,367.2 847.8,369.8 841.7,369.5 836.4,371.7 825.7,370.6 818.1,369.7 813.5,369.3 806.7,371.7 795.2,369.5 789.1,369.7 783.0,370.3 776.9,372.1 771.6,369.3 765.5,370.9 761.7,370.9 753.3,371.5 747.2,372.0 736.5,370.8 729.7,367.8 718.2,370.8 712.1,369.3 701.4,372.0 690.0,370.8 683.2,369.7 676.3,369.2 667.2,369.8 659.6,369.6 647.4,371.9 642.0,373.6 636.3,372.4 630.6,369.6 619.2,369.4 612.3,372.1 604.7,370.8 595.5,371.4 588.7,368.6 582.6,369.1 576.5,371.2 571.5,367.4 565.1,370.0 554.4,371.6 548.3,371.1 537.6,370.4" fill="#fde6e6" stroke="none" /><polygon points="537.6,370.4 548.3,371.1 554.4,371.6 565.1,370.0 571.5,367.4 576.5,371.2 582.6,369.1 588.7,368.6 595.5,371.4 604.7,370.8 612.3,372.1 619.2,369.4 630.6,369.6 636.3,372.4 642.0,373.6 647.4,371.9 659.6,369.6 667.2,369.8 676.3,369.2 683.2,369.7 690.0,370.8 701.4,372.0 712.1,369.3 718.2,370.8 729.7,367.8 736.5,370.8 747.2,372.0 753.3,371.5 761.7,370.9 765.5,370.9 771.6,369.3 776.9,372.1 783.0,370.3 789.1,369.7 795.2,369.5 806.7,371.7 813.5,369.3 818.1,369.7 825.7,370.6 836.4,371.7 841.7,369.5 847.8,369.8 860.4,367.2 866.1,369.9 866.1,371.1 860.4,369.1 847.8,371.4 841.7,371.0 836.4,373.0 825.7,372.3 818.1,370.8 813.5,371.0 806.7,373.0 795.2,370.7 789.1,371.4 783.0,371.3 776.9,373.4 771.6,370.6 765.5,372.8 761.7,372.2 753.3,372.2 747.2,372.2 736.5,372.5 729.7,369.4 718.2,372.7 712.1,370.1 701.4,372.3 690.0,372.0 683.2,370.8 676.3,371.2 667.2,370.9 659.6,371.6 647.4,373.2 642.0,373.9 636.3,372.9 630.6,370.8 619.2,370.2 612.3,372.1 604.7,371.3 595.5,372.8 588.7,369.7 582.6,369.8 576.5,372.0 571.5,369.4 565.1,370.9 554.4,372.4 548.3,372.3 537.6,371.7" fill="#e4f7fa" stroke="none" /><polygon points="537.6,371.7 548.3,372.3 554.4,372.4 565.1,370.9 571.5,369.4 576.5,372.0 582.6,369.8 588.7,369.7 595.5,372.8 604.7,371.3 612.3,372.1 619.2,370.2 630.6,370.8 636.3,372.9 642.0,373.9 647.4,373.2 659.6,371.6 667.2,370.9 676.3,371.2 683.2,370.8 690.0,372.0 701.4,372.3 712.1,370.1 718.2,372.7 729.7,369.4 736.5,372.5 747.2,372.2 753.3,372.2 761.7,372.2 765.5,372.8 771.6,370.6 776.9,373.4 783.0,371.3 789.1,371.4 795.2,370.7 806.7,373.0 813.5,371.0 818.1,370.8 825.7,372.3 836.4,373.0 841.7,371.0 847.8,371.4 860.4,369.1 866.1,371.1 866.1,372.5 860.4,370.7 847.8,373.4 841.7,372.7 836.4,373.9 825.7,373.8 818.1,373.1 813.5,372.5 806.7,374.4 795.2,372.2 789.1,373.8 783.0,373.0 776.9,373.9 771.6,372.8 765.5,374.2 761.7,374.4 753.3,374.3 747.2,374.0 736.5,374.2 729.7,372.0 718.2,373.5 712.1,372.5 701.4,374.7 690.0,374.5 683.2,372.4 676.3,372.6 667.2,373.2 659.6,373.1 647.4,374.3 642.0,375.8 636.3,374.7 630.6,372.6 619.2,372.7 612.3,373.8 604.7,373.7 595.5,373.8 588.7,371.7 582.6,372.3 576.5,373.8 571.5,371.8 565.1,372.8 554.4,373.5 548.3,374.2 537.6,373.0" fill="#e0f5f8" stroke="none" /><polygon points="537.6,373.0 548.3,374.2 554.4,373.5 565.1,372.8 571.5,371.8 576.5,373.8 582.6,372.3 588.7,371.7 595.5,373.8 604.7,373.7 612.3,373.8 619.2,372.7 630.6,372.6 636.3,374.7 642.0,375.8 647.4,374.3 659.6,373.1 667.2,373.2 676.3,372.6 683.2,372.4 690.0,374.5 701.4,374.7 712.1,372.5 718.2,373.5 729.7,372.0 736.5,374.2 747.2,374.0 753.3,374.3 761.7,374.4 765.5,374.2 771.6,372.8 776.9,373.9 783.0,373.0 789.1,373.8 795.2,372.2 806.7,374.4 813.5,372.5 818.1,373.1 825.7,373.8 836.4,373.9 841.7,372.7 847.8,373.4 860.4,370.7 866.1,372.5 866.1,374.9 860.4,374.1 847.8,374.8 841.7,374.6 836.4,376.0 825.7,375.0 818.1,375.0 813.5,375.3 806.7,375.3 795.2,374.2 789.1,374.9 783.0,374.7 776.9,375.9 771.6,374.3 765.5,375.8 761.7,375.0 753.3,375.3 747.2,375.8 736.5,374.9 729.7,374.3 718.2,374.9 712.1,374.2 701.4,375.4 690.0,375.0 683.2,375.0 676.3,375.4 667.2,374.5 659.6,374.3 647.4,375.4 642.0,376.6 636.3,376.1 630.6,374.2 619.2,374.4 612.3,376.1 604.7,375.2 595.5,376.2 588.7,374.0 582.6,373.9 576.5,375.9 571.5,374.4 565.1,374.8 554.4,375.8 548.3,375.1 537.6,375.4" fill="#fde9e2" stroke="none" /><polygon points="537.6,375.4 548.3,375.1 554.4,375.8 565.1,374.8 571.5,374.4 576.5,375.9 582.6,373.9 588.7,374.0 595.5,376.2 604.7,375.2 612.3,376.1 619.2,374.4 630.6,374.2 636.3,376.1 642.0,376.6 647.4,375.4 659.6,374.3 667.2,374.5 676.3,375.4 683.2,375.0 690.0,375.0 701.4,375.4 712.1,374.2 718.2,374.9 729.7,374.3 736.5,374.9 747.2,375.8 753.3,375.3 761.7,375.0 765.5,375.8 771.6,374.3 776.9,375.9 783.0,374.7 789.1,374.9 795.2,374.2 806.7,375.3 813.5,375.3 818.1,375.0 825.7,375.0 836.4,376.0 841.7,374.6 847.8,374.8 860.4,374.1 866.1,374.9 866.1,375.9 860.4,375.6 847.8,376.2 841.7,376.3 836.4,377.1 825.7,377.1 818.1,377.0 813.5,377.0 806.7,376.6 795.2,376.3 789.1,376.7 783.0,376.7 776.9,377.1 771.6,376.5 765.5,377.3 761.7,376.7 753.3,376.7 747.2,376.4 736.5,376.4 729.7,375.6 718.2,376.3 712.1,376.4 701.4,376.3 690.0,376.4 683.2,376.5 676.3,376.7 667.2,377.0 659.6,377.0 647.4,376.4 642.0,377.5 636.3,377.4 630.6,375.9 619.2,376.1 612.3,376.4 604.7,377.0 595.5,377.1 588.7,376.2 582.6,375.9 576.5,376.9 571.5,375.9 565.1,376.5 554.4,377.3 548.3,376.8 537.6,376.6" fill="#f4f4e0" stroke="none" /><polygon points="537.6,376.6 548.3,376.8 554.4,377.3 565.1,376.5 571.5,375.9 576.5,376.9 582.6,375.9 588.7,376.2 595.5,377.1 604.7,377.0 612.3,376.4 619.2,376.1 630.6,375.9 636.3,377.4 642.0,377.5 647.4,376.4 659.6,377.0 667.2,377.0 676.3,376.7 683.2,376.5 690.0,376.4 701.4,376.3 712.1,376.4 718.2,376.3 729.7,375.6 736.5,376.4 747.2,376.4 753.3,376.7 761.7,376.7 765.5,377.3 771.6,376.5 776.9,377.1 783.0,376.7 789.1,376.7 795.2,376.3 806.7,376.6 813.5,377.0 818.1,377.0 825.7,377.1 836.4,377.1 841.7,376.3 847.8,376.2 860.4,375.6 866.1,375.9 866.1,378.1 860.4,378.1 847.8,378.1 841.7,378.1 836.4,378.1 825.7,378.1 818.1,378.1 813.5,378.1 806.7,378.1 795.2,378.1 789.1,378.1 783.0,378.1 776.9,378.1 771.6,378.1 765.5,378.1 761.7,378.1 753.3,378.1 747.2,378.1 736.5,378.1 729.7,378.1 718.2,378.1 712.1,378.1 701.4,378.1 690.0,378.1 683.2,378.1 676.3,378.1 667.2,378.1 659.6,378.1 647.4,378.1 642.0,378.1 636.3,378.1 630.6,378.1 619.2,378.1 612.3,378.1 604.7,378.1 595.5,378.1 588.7,378.1 582.6,378.1 576.5,378.1 571.5,378.1 565.1,378.1 554.4,378.1 548.3,378.1 537.6,378.1" fill="#fde7ef" stroke="none" /><polygon points="630.6,359.3 636.3,330.3 642.0,367.7 647.4,293.0 659.6,360.0 659.3,366.7 654.0,371.3 647.3,364.7 641.3,369.0 636.7,372.0 630.6,366.7" fill="#fce3eb" stroke="none" /><polygon points="860.4,341.0 866.1,359.3 871.6,232.6 877.6,312.8 883.7,314.3 889.0,313.2 889.0,330.0 872.0,329.4 866.1,378.3 860.4,363.3" fill="#e4f1f5" stroke="none" /><polygon points="866.1,378.3 872.0,329.4 889.0,330.0 889.0,378.3" fill="#f1f0e4" stroke="none" /><polyline points="537.6,378.1 548.3,378.1 554.4,378.1 565.1,378.1 571.5,378.1 576.5,378.1 582.6,378.1 588.7,378.1 595.5,378.1 604.7,378.1 612.3,378.1 619.2,378.1 630.6,378.1 636.3,378.1 642.0,378.1 647.4,378.1 659.6,378.1 667.2,378.1 676.3,378.1 683.2,378.1 690.0,378.1 701.4,378.1 712.1,378.1 718.2,378.1 729.7,378.1 736.5,378.1 747.2,378.1 753.3,378.1 761.7,378.1 765.5,378.1 771.6,378.1 776.9,378.1 783.0,378.1 789.1,378.1 795.2,378.1 806.7,378.1 813.5,378.1 818.1,378.1 825.7,378.1 836.4,378.1 841.7,378.1 847.8,378.1 860.4,378.1 866.1,378.1" fill="none" stroke="#3f51b5" stroke-width="1.6" stroke-linejoin="round" /><polyline points="537.6,376.6 548.3,376.8 554.4,377.3 565.1,376.5 571.5,375.9 576.5,376.9 582.6,375.9 588.7,376.2 595.5,377.1 604.7,377.0 612.3,376.4 619.2,376.1 630.6,375.9 636.3,377.4 642.0,377.5 647.4,376.4 659.6,377.0 667.2,377.0 676.3,376.7 683.2,376.5 690.0,376.4 701.4,376.3 712.1,376.4 718.2,376.3 729.7,375.6 736.5,376.4 747.2,376.4 753.3,376.7 761.7,376.7 765.5,377.3 771.6,376.5 776.9,377.1 783.0,376.7 789.1,376.7 795.2,376.3 806.7,376.6 813.5,377.0 818.1,377.0 825.7,377.1 836.4,377.1 841.7,376.3 847.8,376.2 860.4,375.6 866.1,375.9" fill="none" stroke="#e91e63" stroke-width="1.6" stroke-linejoin="round" /><polyline points="537.6,375.4 548.3,375.1 554.4,375.8 565.1,374.8 571.5,374.4 576.5,375.9 582.6,373.9 588.7,374.0 595.5,376.2 604.7,375.2 612.3,376.1 619.2,374.4 630.6,374.2 636.3,376.1 642.0,376.6 647.4,375.4 659.6,374.3 667.2,374.5 676.3,375.4 683.2,375.0 690.0,375.0 701.4,375.4 712.1,374.2 718.2,374.9 729.7,374.3 736.5,374.9 747.2,375.8 753.3,375.3 761.7,375.0 765.5,375.8 771.6,374.3 776.9,375.9 783.0,374.7 789.1,374.9 795.2,374.2 806.7,375.3 813.5,375.3 818.1,375.0 825.7,375.0 836.4,376.0 841.7,374.6 847.8,374.8 860.4,374.1 866.1,374.9" fill="none" stroke="#9e9d24" stroke-width="1.6" stroke-linejoin="round" /><polyline points="537.6,373.0 548.3,374.2 554.4,373.5 565.1,372.8 571.5,371.8 576.5,373.8 582.6,372.3 588.7,371.7 595.5,373.8 604.7,373.7 612.3,373.8 619.2,372.7 630.6,372.6 636.3,374.7 642.0,375.8 647.4,374.3 659.6,373.1 667.2,373.2 676.3,372.6 683.2,372.4 690.0,374.5 701.4,374.7 712.1,372.5 718.2,373.5 729.7,372.0 736.5,374.2 747.2,374.0 753.3,374.3 761.7,374.4 765.5,374.2 771.6,372.8 776.9,373.9 783.0,373.0 789.1,373.8 795.2,372.2 806.7,374.4 813.5,372.5 818.1,373.1 825.7,373.8 836.4,373.9 841.7,372.7 847.8,373.4 860.4,370.7 866.1,372.5" fill="none" stroke="#f4511e" stroke-width="1.7" stroke-linejoin="round" /><polyline points="537.6,371.7 548.3,372.3 554.4,372.4 565.1,370.9 571.5,369.4 576.5,372.0 582.6,369.8 588.7,369.7 595.5,372.8 604.7,371.3 612.3,372.1 619.2,370.2 630.6,370.8 636.3,372.9 642.0,373.9 647.4,373.2 659.6,371.6 667.2,370.9 676.3,371.2 683.2,370.8 690.0,372.0 701.4,372.3 712.1,370.1 718.2,372.7 729.7,369.4 736.5,372.5 747.2,372.2 753.3,372.2 761.7,372.2 765.5,372.8 771.6,370.6 776.9,373.4 783.0,371.3 789.1,371.4 795.2,370.7 806.7,373.0 813.5,371.0 818.1,370.8 825.7,372.3 836.4,373.0 841.7,371.0 847.8,371.4 860.4,369.1 866.1,371.1" fill="none" stroke="#00acc1" stroke-width="2.2" stroke-linejoin="round" /><polyline points="537.6,370.4 548.3,371.1 554.4,371.6 565.1,370.0 571.5,367.4 576.5,371.2 582.6,369.1 588.7,368.6 595.5,371.4 604.7,370.8 612.3,372.1 619.2,369.4 630.6,369.6 636.3,372.4 642.0,373.6 647.4,371.9 659.6,369.6 667.2,369.8 676.3,369.2 683.2,369.7 690.0,370.8 701.4,372.0 712.1,369.3 718.2,370.8 729.7,367.8 736.5,370.8 747.2,372.0 753.3,371.5 761.7,370.9 765.5,370.9 771.6,369.3 776.9,372.1 783.0,370.3 789.1,369.7 795.2,369.5 806.7,371.7 813.5,369.3 818.1,369.7 825.7,370.6 836.4,371.7 841.7,369.5 847.8,369.8 860.4,367.2 866.1,369.9" fill="none" stroke="#26c6da" stroke-width="1.6" stroke-linejoin="round" /><polyline points="537.6,369.4 548.3,369.2 554.4,369.9 565.1,368.1 571.5,364.6 576.5,370.0 582.6,367.6 588.7,367.0 595.5,370.9 604.7,369.7 612.3,369.9 619.2,366.8 630.6,367.6 636.3,371.1 642.0,372.0 647.4,370.5 659.6,368.2 667.2,367.7 676.3,367.8 683.2,368.1 690.0,370.6 701.4,370.6 712.1,367.1 718.2,369.2 729.7,366.0 736.5,368.8 747.2,370.9 753.3,369.6 761.7,369.6 765.5,370.6 771.6,367.3 776.9,370.2 783.0,369.1 789.1,367.9 795.2,367.6 806.7,369.9 813.5,367.2 818.1,366.9 825.7,369.6 836.4,370.2 841.7,368.4 847.8,368.5 860.4,365.1 866.1,368.2" fill="none" stroke="#e53935" stroke-width="1.6" stroke-linejoin="round" /><polyline points="537.6,368.0 548.3,367.9 554.4,368.7 565.1,366.7 571.5,362.8 576.5,368.9 582.6,366.1 588.7,364.7 595.5,369.4 604.7,367.8 612.3,369.4 619.2,365.9 630.6,366.5 636.3,370.9 642.0,371.5 647.4,370.0 659.6,367.3 667.2,365.8 676.3,367.3 683.2,366.6 690.0,368.6 701.4,369.6 712.1,366.5 718.2,369.2 729.7,363.8 736.5,368.4 747.2,370.1 753.3,368.8 761.7,369.3 765.5,369.2 771.6,366.7 776.9,369.3 783.0,368.3 789.1,367.7 795.2,366.0 806.7,369.5 813.5,366.0 818.1,366.6 825.7,368.9 836.4,369.8 841.7,367.1 847.8,367.4 860.4,362.8 866.1,366.8" fill="none" stroke="#ff7043" stroke-width="1.6" stroke-linejoin="round" /><polyline points="537.6,366.9 548.3,366.8 554.4,367.0 565.1,365.6 571.5,361.6 576.5,368.1 582.6,364.2 588.7,362.9 595.5,368.9 604.7,366.2 612.3,368.4 619.2,363.8 630.6,364.6 636.3,369.9 642.0,370.3 647.4,368.1 659.6,365.3 667.2,365.1 676.3,365.7 683.2,365.0 690.0,368.4 701.4,368.6 712.1,365.3 718.2,367.0 729.7,361.8 736.5,367.0 747.2,368.3 753.3,367.5 761.7,367.7 765.5,368.1 771.6,365.4 776.9,368.6 783.0,366.5 789.1,365.7 795.2,364.7 806.7,368.6 813.5,364.5 818.1,365.0 825.7,367.6 836.4,368.1 841.7,365.7 847.8,365.2 860.4,351.9 866.1,364.8" fill="none" stroke="#9e9d24" stroke-width="1.8" stroke-linejoin="round" /><polyline points="537.6,365.2 548.3,365.1 554.4,366.9 565.1,364.3 571.5,359.5 576.5,367.0 582.6,362.7 588.7,361.8 595.5,367.7 604.7,364.9 612.3,366.9 619.2,362.6 630.6,363.8 636.3,369.1 642.0,369.6 647.4,367.4 659.6,363.4 667.2,363.2 676.3,364.2 683.2,363.8 690.0,366.7 701.4,367.3 712.1,362.9 718.2,366.4 729.7,360.8 736.5,365.3 747.2,367.8 753.3,365.4 761.7,365.9 765.5,366.6 771.6,363.8 776.9,367.3 783.0,365.2 789.1,364.6 795.2,362.2 806.7,367.2 813.5,362.8 818.1,363.1 825.7,365.4 836.4,366.6 841.7,364.2 847.8,364.1 860.4,348.7 866.1,363.2" fill="none" stroke="#9fa8da" stroke-width="1.8" stroke-linejoin="round" /><polyline points="631.8,361.0 636.3,340.0 640.6,368.5 647.4,304.0 657.8,361.5" fill="none" stroke="#a89fbf" stroke-width="1.5" stroke-linejoin="round" /><polyline points="630.6,366.7 636.7,372.0 641.3,369.0 647.3,364.7 654.0,371.3 659.3,366.7" fill="none" stroke="#c2185b" stroke-width="1.8" stroke-linejoin="round" /><polyline points="860.4,345.0 866.1,360.0 871.6,250.0 877.6,316.0" fill="none" stroke="#f48fb1" stroke-width="1.0" stroke-linejoin="round" /><polyline points="877.6,317.5 883.7,318.1 889.0,317.5" fill="none" stroke="#9fa8da" stroke-width="1.5" stroke-linejoin="round" /><polyline points="877.6,318.9 883.7,319.5 889.0,318.9" fill="none" stroke="#9e9d24" stroke-width="1.5" stroke-linejoin="round" /><polyline points="877.6,320.2 883.7,320.8 889.0,320.2" fill="none" stroke="#ff7043" stroke-width="1.5" stroke-linejoin="round" /><polyline points="877.6,321.6 883.7,322.2 889.0,321.6" fill="none" stroke="#e53935" stroke-width="1.5" stroke-linejoin="round" /><polyline points="877.6,322.9 883.7,323.5 889.0,322.9" fill="none" stroke="#26c6da" stroke-width="1.5" stroke-linejoin="round" /><polyline points="877.6,324.2 883.7,324.9 889.0,324.2" fill="none" stroke="#00acc1" stroke-width="1.5" stroke-linejoin="round" /><polyline points="877.6,325.6 883.7,326.2 889.0,325.6" fill="none" stroke="#f4511e" stroke-width="1.5" stroke-linejoin="round" /><polyline points="877.6,326.9 883.7,327.6 889.0,326.9" fill="none" stroke="#9e9d24" stroke-width="1.5" stroke-linejoin="round" /><polyline points="877.6,328.3 883.7,328.9 889.0,328.3" fill="none" stroke="#e91e63" stroke-width="1.5" stroke-linejoin="round" /><polyline points="866.1,378.3 872.0,329.4 889.0,330.0" fill="none" stroke="#d81b60" stroke-width="1.8" stroke-linejoin="round" /><polyline points="537.6,361.6 548.3,362.3 554.4,363.1 565.1,360.5 571.5,354.7 576.5,363.5 582.6,358.5 588.7,357.4 595.5,364.6 604.7,362.0 612.3,363.8 619.2,358.5 630.6,359.3 636.3,330.3 642.0,367.7 647.4,293.0 659.6,360.0 667.2,359.3 676.3,360.0 683.2,359.3 690.0,363.6 701.4,364.6 712.1,359.3 718.2,363.1 729.7,355.5 736.5,362.4 747.2,364.6 753.3,362.7 761.7,363.1 765.5,363.9 771.6,359.6 776.9,364.6 783.0,362.0 789.1,360.8 795.2,358.5 806.7,363.9 813.5,359.3 818.1,359.0 825.7,362.4 836.4,363.9 841.7,360.4 847.8,360.4 860.4,341.0 866.1,359.3 871.6,232.6 877.6,312.8 883.7,314.3 889.0,313.2" fill="none" stroke="#5e35b1" stroke-width="1.6" stroke-linejoin="round" /><line x1="1014" y1="193.1" x2="1380" y2="193.1" stroke="#e6e6e6" stroke-width="1"/><text x="1387.4" y="196.1" font-size="11.5" fill="#555555" text-anchor="start" font-weight="400">2.5G</text><line x1="1014" y1="230.1" x2="1380" y2="230.1" stroke="#e6e6e6" stroke-width="1"/><text x="1387.4" y="233.1" font-size="11.5" fill="#555555" text-anchor="start" font-weight="400">2.0G</text><line x1="1014" y1="267.1" x2="1380" y2="267.1" stroke="#e6e6e6" stroke-width="1"/><text x="1387.4" y="270.1" font-size="11.5" fill="#555555" text-anchor="start" font-weight="400">1.5G</text><line x1="1014" y1="304.0" x2="1380" y2="304.0" stroke="#e6e6e6" stroke-width="1"/><text x="1387.4" y="307.0" font-size="11.5" fill="#555555" text-anchor="start" font-weight="400">1.0G</text><line x1="1014" y1="341.0" x2="1380" y2="341.0" stroke="#e6e6e6" stroke-width="1"/><text x="1387.4" y="344.0" font-size="11.5" fill="#555555" text-anchor="start" font-weight="400">0.5G</text><line x1="1014" y1="378.0" x2="1380" y2="378.0" stroke="#cfcfcf" stroke-width="1"/><text x="1387.4" y="381.0" font-size="11.5" fill="#555555" text-anchor="start" font-weight="400">0</text><line x1="1091.5" y1="378.0" x2="1091.5" y2="383.0" stroke="#cfcfcf" stroke-width="1"/><text x="1092.3" y="395.0" font-size="11.5" fill="#555555" text-anchor="middle" font-weight="400">9:30</text><line x1="1183.0" y1="378.0" x2="1183.0" y2="383.0" stroke="#cfcfcf" stroke-width="1"/><text x="1183.8" y="395.0" font-size="11.5" fill="#555555" text-anchor="middle" font-weight="400">9:45</text><line x1="1274.7" y1="378.0" x2="1274.7" y2="383.0" stroke="#cfcfcf" stroke-width="1"/><text x="1275.5" y="395.0" font-size="11.5" fill="#555555" text-anchor="middle" font-weight="400">10 AM</text><line x1="1366.2" y1="378.0" x2="1366.2" y2="383.0" stroke="#cfcfcf" stroke-width="1"/><text x="1367.0" y="395.0" font-size="11.5" fill="#555555" text-anchor="middle" font-weight="400">10:15</text><clipPath id="ramclip"><rect x="1014" y="180" width="370" height="200"/></clipPath><g clip-path="url(#ramclip)"><rect x="1007.5" y="376.10" width="19.5" height="2.05" fill="#fb8c00"/><rect x="1007.5" y="372.10" width="19.5" height="4.05" fill="#7cb342"/><rect x="1007.5" y="365.00" width="19.5" height="7.15" fill="#4285f4"/><rect x="1007.5" y="363.00" width="19.5" height="2.05" fill="#e91e63"/><rect x="1007.5" y="362.00" width="19.5" height="1.05" fill="#ff7043"/><rect x="1007.5" y="355.90" width="19.5" height="6.15" fill="#e91e63"/><rect x="1007.5" y="353.60" width="19.5" height="2.35" fill="#ff8a65"/><rect x="1007.5" y="341.40" width="19.5" height="12.25" fill="#5c6bc0"/><rect x="1007.5" y="336.10" width="19.5" height="5.35" fill="#ab47bc"/><rect x="1007.5" y="317.10" width="19.5" height="19.05" fill="#9e9a22"/><rect x="1007.5" y="310.20" width="19.5" height="6.95" fill="#26a0a8"/><rect x="1007.5" y="308.70" width="19.5" height="1.55" fill="#b39ddb"/><rect x="1007.5" y="294.90" width="19.5" height="13.85" fill="#7cb342"/><rect x="1007.5" y="293.70" width="19.5" height="1.25" fill="#f4b400"/><rect x="1007.5" y="291.40" width="19.5" height="2.35" fill="#5e35b1"/><rect x="1007.5" y="290.70" width="19.5" height="0.75" fill="#90caf9"/><rect x="1007.5" y="276.50" width="19.5" height="14.25" fill="#e67030"/><rect x="1007.5" y="271.20" width="19.5" height="5.35" fill="#17a8c4"/><rect x="1007.5" y="246.80" width="19.5" height="24.45" fill="#f06292"/><rect x="1007.5" y="240.70" width="19.5" height="6.15" fill="#0b7363"/><rect x="1036.3" y="376.10" width="19.5" height="2.05" fill="#fb8c00"/><rect x="1036.3" y="372.10" width="19.5" height="4.05" fill="#7cb342"/><rect x="1036.3" y="365.00" width="19.5" height="7.15" fill="#4285f4"/><rect x="1036.3" y="363.00" width="19.5" height="2.05" fill="#e91e63"/><rect x="1036.3" y="362.00" width="19.5" height="1.05" fill="#ff7043"/><rect x="1036.3" y="355.90" width="19.5" height="6.15" fill="#e91e63"/><rect x="1036.3" y="353.60" width="19.5" height="2.35" fill="#ff8a65"/><rect x="1036.3" y="341.40" width="19.5" height="12.25" fill="#5c6bc0"/><rect x="1036.3" y="336.10" width="19.5" height="5.35" fill="#ab47bc"/><rect x="1036.3" y="317.10" width="19.5" height="19.05" fill="#9e9a22"/><rect x="1036.3" y="310.20" width="19.5" height="6.95" fill="#26a0a8"/><rect x="1036.3" y="308.70" width="19.5" height="1.55" fill="#b39ddb"/><rect x="1036.3" y="294.90" width="19.5" height="13.85" fill="#7cb342"/><rect x="1036.3" y="293.70" width="19.5" height="1.25" fill="#f4b400"/><rect x="1036.3" y="291.40" width="19.5" height="2.35" fill="#5e35b1"/><rect x="1036.3" y="290.70" width="19.5" height="0.75" fill="#90caf9"/><rect x="1036.3" y="276.50" width="19.5" height="14.25" fill="#e67030"/><rect x="1036.3" y="271.20" width="19.5" height="5.35" fill="#17a8c4"/><rect x="1036.3" y="245.70" width="19.5" height="25.55" fill="#f06292"/><rect x="1036.3" y="239.60" width="19.5" height="6.15" fill="#0b7363"/><rect x="1067.1" y="376.10" width="19.5" height="2.05" fill="#fb8c00"/><rect x="1067.1" y="372.10" width="19.5" height="4.05" fill="#7cb342"/><rect x="1067.1" y="365.00" width="19.5" height="7.15" fill="#4285f4"/><rect x="1067.1" y="363.00" width="19.5" height="2.05" fill="#e91e63"/><rect x="1067.1" y="362.00" width="19.5" height="1.05" fill="#ff7043"/><rect x="1067.1" y="355.90" width="19.5" height="6.15" fill="#e91e63"/><rect x="1067.1" y="353.60" width="19.5" height="2.35" fill="#ff8a65"/><rect x="1067.1" y="341.40" width="19.5" height="12.25" fill="#5c6bc0"/><rect x="1067.1" y="336.10" width="19.5" height="5.35" fill="#ab47bc"/><rect x="1067.1" y="317.10" width="19.5" height="19.05" fill="#9e9a22"/><rect x="1067.1" y="310.20" width="19.5" height="6.95" fill="#26a0a8"/><rect x="1067.1" y="308.70" width="19.5" height="1.55" fill="#b39ddb"/><rect x="1067.1" y="294.90" width="19.5" height="13.85" fill="#7cb342"/><rect x="1067.1" y="293.70" width="19.5" height="1.25" fill="#f4b400"/><rect x="1067.1" y="291.40" width="19.5" height="2.35" fill="#5e35b1"/><rect x="1067.1" y="290.70" width="19.5" height="0.75" fill="#90caf9"/><rect x="1067.1" y="276.50" width="19.5" height="14.25" fill="#e67030"/><rect x="1067.1" y="271.20" width="19.5" height="5.35" fill="#17a8c4"/><rect x="1067.1" y="244.80" width="19.5" height="26.45" fill="#f06292"/><rect x="1067.1" y="238.70" width="19.5" height="6.15" fill="#0b7363"/><rect x="1098.1" y="376.10" width="19.5" height="2.05" fill="#fb8c00"/><rect x="1098.1" y="372.10" width="19.5" height="4.05" fill="#7cb342"/><rect x="1098.1" y="365.00" width="19.5" height="7.15" fill="#4285f4"/><rect x="1098.1" y="363.00" width="19.5" height="2.05" fill="#e91e63"/><rect x="1098.1" y="362.00" width="19.5" height="1.05" fill="#ff7043"/><rect x="1098.1" y="355.90" width="19.5" height="6.15" fill="#e91e63"/><rect x="1098.1" y="353.60" width="19.5" height="2.35" fill="#ff8a65"/><rect x="1098.1" y="341.40" width="19.5" height="12.25" fill="#5c6bc0"/><rect x="1098.1" y="336.10" width="19.5" height="5.35" fill="#ab47bc"/><rect x="1098.1" y="317.10" width="19.5" height="19.05" fill="#9e9a22"/><rect x="1098.1" y="310.20" width="19.5" height="6.95" fill="#26a0a8"/><rect x="1098.1" y="308.70" width="19.5" height="1.55" fill="#b39ddb"/><rect x="1098.1" y="294.90" width="19.5" height="13.85" fill="#7cb342"/><rect x="1098.1" y="293.70" width="19.5" height="1.25" fill="#f4b400"/><rect x="1098.1" y="291.40" width="19.5" height="2.35" fill="#5e35b1"/><rect x="1098.1" y="290.70" width="19.5" height="0.75" fill="#90caf9"/><rect x="1098.1" y="276.50" width="19.5" height="14.25" fill="#e67030"/><rect x="1098.1" y="271.20" width="19.5" height="5.35" fill="#17a8c4"/><rect x="1098.1" y="244.80" width="19.5" height="26.45" fill="#f06292"/><rect x="1098.1" y="238.70" width="19.5" height="6.15" fill="#0b7363"/><rect x="1128.0" y="376.10" width="19.5" height="2.05" fill="#fb8c00"/><rect x="1128.0" y="372.10" width="19.5" height="4.05" fill="#7cb342"/><rect x="1128.0" y="365.00" width="19.5" height="7.15" fill="#4285f4"/><rect x="1128.0" y="363.00" width="19.5" height="2.05" fill="#e91e63"/><rect x="1128.0" y="362.00" width="19.5" height="1.05" fill="#ff7043"/><rect x="1128.0" y="355.90" width="19.5" height="6.15" fill="#e91e63"/><rect x="1128.0" y="353.60" width="19.5" height="2.35" fill="#ff8a65"/><rect x="1128.0" y="341.40" width="19.5" height="12.25" fill="#5c6bc0"/><rect x="1128.0" y="336.10" width="19.5" height="5.35" fill="#ab47bc"/><rect x="1128.0" y="317.10" width="19.5" height="19.05" fill="#9e9a22"/><rect x="1128.0" y="310.20" width="19.5" height="6.95" fill="#26a0a8"/><rect x="1128.0" y="308.70" width="19.5" height="1.55" fill="#b39ddb"/><rect x="1128.0" y="294.90" width="19.5" height="13.85" fill="#7cb342"/><rect x="1128.0" y="293.70" width="19.5" height="1.25" fill="#f4b400"/><rect x="1128.0" y="291.40" width="19.5" height="2.35" fill="#5e35b1"/><rect x="1128.0" y="290.70" width="19.5" height="0.75" fill="#90caf9"/><rect x="1128.0" y="276.50" width="19.5" height="14.25" fill="#e67030"/><rect x="1128.0" y="271.20" width="19.5" height="5.35" fill="#17a8c4"/><rect x="1128.0" y="245.70" width="19.5" height="25.55" fill="#f06292"/><rect x="1128.0" y="239.60" width="19.5" height="6.15" fill="#0b7363"/><rect x="1158.9" y="376.10" width="19.5" height="2.05" fill="#fb8c00"/><rect x="1158.9" y="372.10" width="19.5" height="4.05" fill="#7cb342"/><rect x="1158.9" y="365.00" width="19.5" height="7.15" fill="#4285f4"/><rect x="1158.9" y="363.00" width="19.5" height="2.05" fill="#e91e63"/><rect x="1158.9" y="362.00" width="19.5" height="1.05" fill="#ff7043"/><rect x="1158.9" y="355.90" width="19.5" height="6.15" fill="#e91e63"/><rect x="1158.9" y="353.60" width="19.5" height="2.35" fill="#ff8a65"/><rect x="1158.9" y="341.40" width="19.5" height="12.25" fill="#5c6bc0"/><rect x="1158.9" y="336.10" width="19.5" height="5.35" fill="#ab47bc"/><rect x="1158.9" y="317.10" width="19.5" height="19.05" fill="#9e9a22"/><rect x="1158.9" y="310.20" width="19.5" height="6.95" fill="#26a0a8"/><rect x="1158.9" y="308.70" width="19.5" height="1.55" fill="#b39ddb"/><rect x="1158.9" y="294.90" width="19.5" height="13.85" fill="#7cb342"/><rect x="1158.9" y="293.70" width="19.5" height="1.25" fill="#f4b400"/><rect x="1158.9" y="291.40" width="19.5" height="2.35" fill="#5e35b1"/><rect x="1158.9" y="290.70" width="19.5" height="0.75" fill="#90caf9"/><rect x="1158.9" y="276.50" width="19.5" height="14.25" fill="#e67030"/><rect x="1158.9" y="271.20" width="19.5" height="5.35" fill="#17a8c4"/><rect x="1158.9" y="246.00" width="19.5" height="25.25" fill="#f06292"/><rect x="1158.9" y="239.90" width="19.5" height="6.15" fill="#0b7363"/><rect x="1189.7" y="376.10" width="19.5" height="2.05" fill="#fb8c00"/><rect x="1189.7" y="372.10" width="19.5" height="4.05" fill="#7cb342"/><rect x="1189.7" y="365.00" width="19.5" height="7.15" fill="#4285f4"/><rect x="1189.7" y="363.00" width="19.5" height="2.05" fill="#e91e63"/><rect x="1189.7" y="362.00" width="19.5" height="1.05" fill="#ff7043"/><rect x="1189.7" y="355.90" width="19.5" height="6.15" fill="#e91e63"/><rect x="1189.7" y="353.60" width="19.5" height="2.35" fill="#ff8a65"/><rect x="1189.7" y="341.40" width="19.5" height="12.25" fill="#5c6bc0"/><rect x="1189.7" y="336.10" width="19.5" height="5.35" fill="#ab47bc"/><rect x="1189.7" y="317.10" width="19.5" height="19.05" fill="#9e9a22"/><rect x="1189.7" y="310.20" width="19.5" height="6.95" fill="#26a0a8"/><rect x="1189.7" y="308.70" width="19.5" height="1.55" fill="#b39ddb"/><rect x="1189.7" y="294.90" width="19.5" height="13.85" fill="#7cb342"/><rect x="1189.7" y="293.70" width="19.5" height="1.25" fill="#f4b400"/><rect x="1189.7" y="291.40" width="19.5" height="2.35" fill="#5e35b1"/><rect x="1189.7" y="290.70" width="19.5" height="0.75" fill="#90caf9"/><rect x="1189.7" y="276.50" width="19.5" height="14.25" fill="#e67030"/><rect x="1189.7" y="271.20" width="19.5" height="5.35" fill="#17a8c4"/><rect x="1189.7" y="243.70" width="19.5" height="27.55" fill="#f06292"/><rect x="1189.7" y="237.60" width="19.5" height="6.15" fill="#0b7363"/><rect x="1219.4" y="376.10" width="19.5" height="2.05" fill="#fb8c00"/><rect x="1219.4" y="372.10" width="19.5" height="4.05" fill="#7cb342"/><rect x="1219.4" y="365.00" width="19.5" height="7.15" fill="#4285f4"/><rect x="1219.4" y="363.00" width="19.5" height="2.05" fill="#e91e63"/><rect x="1219.4" y="362.00" width="19.5" height="1.05" fill="#ff7043"/><rect x="1219.4" y="355.90" width="19.5" height="6.15" fill="#e91e63"/><rect x="1219.4" y="353.60" width="19.5" height="2.35" fill="#ff8a65"/><rect x="1219.4" y="341.40" width="19.5" height="12.25" fill="#5c6bc0"/><rect x="1219.4" y="336.10" width="19.5" height="5.35" fill="#ab47bc"/><rect x="1219.4" y="317.10" width="19.5" height="19.05" fill="#9e9a22"/><rect x="1219.4" y="310.20" width="19.5" height="6.95" fill="#26a0a8"/><rect x="1219.4" y="308.70" width="19.5" height="1.55" fill="#b39ddb"/><rect x="1219.4" y="294.90" width="19.5" height="13.85" fill="#7cb342"/><rect x="1219.4" y="293.70" width="19.5" height="1.25" fill="#f4b400"/><rect x="1219.4" y="291.40" width="19.5" height="2.35" fill="#5e35b1"/><rect x="1219.4" y="290.70" width="19.5" height="0.75" fill="#90caf9"/><rect x="1219.4" y="276.50" width="19.5" height="14.25" fill="#e67030"/><rect x="1219.4" y="271.20" width="19.5" height="5.35" fill="#17a8c4"/><rect x="1219.4" y="243.70" width="19.5" height="27.55" fill="#f06292"/><rect x="1219.4" y="237.60" width="19.5" height="6.15" fill="#0b7363"/><rect x="1250.3" y="376.10" width="19.5" height="2.05" fill="#fb8c00"/><rect x="1250.3" y="372.10" width="19.5" height="4.05" fill="#7cb342"/><rect x="1250.3" y="365.00" width="19.5" height="7.15" fill="#4285f4"/><rect x="1250.3" y="363.00" width="19.5" height="2.05" fill="#e91e63"/><rect x="1250.3" y="362.00" width="19.5" height="1.05" fill="#ff7043"/><rect x="1250.3" y="355.90" width="19.5" height="6.15" fill="#e91e63"/><rect x="1250.3" y="353.60" width="19.5" height="2.35" fill="#ff8a65"/><rect x="1250.3" y="341.40" width="19.5" height="12.25" fill="#5c6bc0"/><rect x="1250.3" y="336.10" width="19.5" height="5.35" fill="#ab47bc"/><rect x="1250.3" y="317.10" width="19.5" height="19.05" fill="#9e9a22"/><rect x="1250.3" y="310.20" width="19.5" height="6.95" fill="#26a0a8"/><rect x="1250.3" y="308.70" width="19.5" height="1.55" fill="#b39ddb"/><rect x="1250.3" y="294.90" width="19.5" height="13.85" fill="#7cb342"/><rect x="1250.3" y="293.70" width="19.5" height="1.25" fill="#f4b400"/><rect x="1250.3" y="291.40" width="19.5" height="2.35" fill="#5e35b1"/><rect x="1250.3" y="290.70" width="19.5" height="0.75" fill="#90caf9"/><rect x="1250.3" y="276.50" width="19.5" height="14.25" fill="#e67030"/><rect x="1250.3" y="271.20" width="19.5" height="5.35" fill="#17a8c4"/><rect x="1250.3" y="249.00" width="19.5" height="22.25" fill="#f06292"/><rect x="1250.3" y="242.90" width="19.5" height="6.15" fill="#0b7363"/><rect x="1281.1" y="376.10" width="19.5" height="2.05" fill="#fb8c00"/><rect x="1281.1" y="372.10" width="19.5" height="4.05" fill="#7cb342"/><rect x="1281.1" y="365.00" width="19.5" height="7.15" fill="#4285f4"/><rect x="1281.1" y="363.00" width="19.5" height="2.05" fill="#e91e63"/><rect x="1281.1" y="362.00" width="19.5" height="1.05" fill="#ff7043"/><rect x="1281.1" y="355.90" width="19.5" height="6.15" fill="#e91e63"/><rect x="1281.1" y="353.60" width="19.5" height="2.35" fill="#ff8a65"/><rect x="1281.1" y="341.40" width="19.5" height="12.25" fill="#5c6bc0"/><rect x="1281.1" y="336.10" width="19.5" height="5.35" fill="#ab47bc"/><rect x="1281.1" y="317.10" width="19.5" height="19.05" fill="#9e9a22"/><rect x="1281.1" y="310.20" width="19.5" height="6.95" fill="#26a0a8"/><rect x="1281.1" y="308.70" width="19.5" height="1.55" fill="#b39ddb"/><rect x="1281.1" y="294.90" width="19.5" height="13.85" fill="#7cb342"/><rect x="1281.1" y="293.70" width="19.5" height="1.25" fill="#f4b400"/><rect x="1281.1" y="291.40" width="19.5" height="2.35" fill="#5e35b1"/><rect x="1281.1" y="290.70" width="19.5" height="0.75" fill="#90caf9"/><rect x="1281.1" y="276.50" width="19.5" height="14.25" fill="#e67030"/><rect x="1281.1" y="271.20" width="19.5" height="5.35" fill="#17a8c4"/><rect x="1281.1" y="249.90" width="19.5" height="21.35" fill="#f06292"/><rect x="1281.1" y="243.80" width="19.5" height="6.15" fill="#0b7363"/><rect x="1310.9" y="376.10" width="19.5" height="2.05" fill="#fb8c00"/><rect x="1310.9" y="372.10" width="19.5" height="4.05" fill="#7cb342"/><rect x="1310.9" y="365.00" width="19.5" height="7.15" fill="#4285f4"/><rect x="1310.9" y="363.00" width="19.5" height="2.05" fill="#e91e63"/><rect x="1310.9" y="362.00" width="19.5" height="1.05" fill="#ff7043"/><rect x="1310.9" y="355.90" width="19.5" height="6.15" fill="#e91e63"/><rect x="1310.9" y="353.60" width="19.5" height="2.35" fill="#ff8a65"/><rect x="1310.9" y="341.40" width="19.5" height="12.25" fill="#5c6bc0"/><rect x="1310.9" y="336.10" width="19.5" height="5.35" fill="#ab47bc"/><rect x="1310.9" y="317.10" width="19.5" height="19.05" fill="#9e9a22"/><rect x="1310.9" y="310.20" width="19.5" height="6.95" fill="#26a0a8"/><rect x="1310.9" y="308.70" width="19.5" height="1.55" fill="#b39ddb"/><rect x="1310.9" y="294.90" width="19.5" height="13.85" fill="#7cb342"/><rect x="1310.9" y="293.70" width="19.5" height="1.25" fill="#f4b400"/><rect x="1310.9" y="291.40" width="19.5" height="2.35" fill="#5e35b1"/><rect x="1310.9" y="290.70" width="19.5" height="0.75" fill="#90caf9"/><rect x="1310.9" y="276.50" width="19.5" height="14.25" fill="#e67030"/><rect x="1310.9" y="271.20" width="19.5" height="5.35" fill="#17a8c4"/><rect x="1310.9" y="249.00" width="19.5" height="22.25" fill="#f06292"/><rect x="1310.9" y="242.90" width="19.5" height="6.15" fill="#0b7363"/><rect x="1341.7" y="367.77" width="19.5" height="10.38" fill="#e57ef0"/><rect x="1341.7" y="360.95" width="19.5" height="6.87" fill="#7cb342"/><rect x="1341.7" y="354.04" width="19.5" height="6.97" fill="#4285f4"/><rect x="1341.7" y="351.03" width="19.5" height="3.06" fill="#e91e63"/><rect x="1341.7" y="350.02" width="19.5" height="1.05" fill="#ff7043"/><rect x="1341.7" y="344.91" width="19.5" height="5.16" fill="#e91e63"/><rect x="1341.7" y="342.60" width="19.5" height="2.36" fill="#ff8a65"/><rect x="1341.7" y="331.17" width="19.5" height="11.48" fill="#5c6bc0"/><rect x="1341.7" y="325.36" width="19.5" height="5.87" fill="#ab47bc"/><rect x="1341.7" y="305.51" width="19.5" height="19.90" fill="#9e9a22"/><rect x="1341.7" y="299.69" width="19.5" height="5.87" fill="#26a0a8"/><rect x="1341.7" y="297.48" width="19.5" height="2.26" fill="#f48fb1"/><rect x="1341.7" y="283.04" width="19.5" height="14.49" fill="#7cb342"/><rect x="1341.7" y="281.54" width="19.5" height="1.55" fill="#f4b400"/><rect x="1341.7" y="279.54" width="19.5" height="2.06" fill="#5e35b1"/><rect x="1341.7" y="278.43" width="19.5" height="1.15" fill="#90caf9"/><rect x="1341.7" y="264.70" width="19.5" height="13.79" fill="#e67030"/><rect x="1341.7" y="259.38" width="19.5" height="5.36" fill="#17a8c4"/><rect x="1341.7" y="235.52" width="19.5" height="23.91" fill="#f06292"/><rect x="1341.7" y="229.10" width="19.5" height="6.47" fill="#0b7363"/></g><line x1="1014" y1="378.0" x2="1380" y2="378.0" stroke="#cfcfcf" stroke-width="1"/></svg>
</body></html>
